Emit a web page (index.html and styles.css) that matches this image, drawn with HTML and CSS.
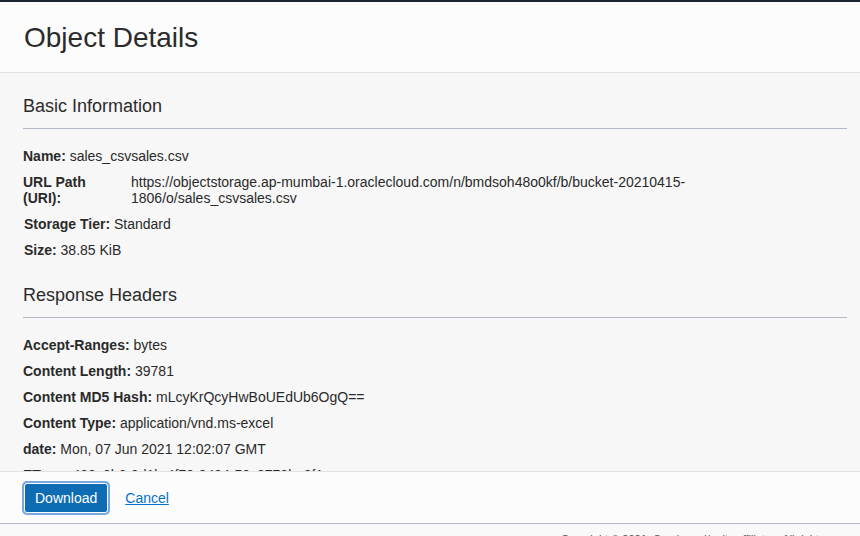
FILE: index.html
```html
<!DOCTYPE html>
<html lang="en">
<head>
<meta charset="utf-8">
<title>Object Details</title>
<link rel="stylesheet" href="styles.css">
</head>
<body>
<div class="page">
  <div class="topbar"></div>
  <header class="header">
    <h1 class="title">Object Details</h1>
  </header>
  <main class="content">
    <section class="section">
      <h2 class="section-title">Basic Information</h2>
      <div class="props">
        <div class="prop"><span class="label">Name:</span> sales_csvsales.csv</div>
        <div class="prop prop-grid"><span class="label">URL Path (URI):</span><span class="value">https://objectstorage.ap-mumbai-1.oraclecloud.com/n/bmdsoh48o0kf/b/bucket-20210415-<wbr>1806/o/sales_csvsales.csv</span></div>
        <div class="prop prop-indent"><span class="label">Storage Tier:</span> Standard</div>
        <div class="prop prop-indent"><span class="label">Size:</span> 38.85 KiB</div>
      </div>
    </section>
    <section class="section">
      <h2 class="section-title">Response Headers</h2>
      <div class="props">
        <div class="prop"><span class="label">Accept-Ranges:</span> bytes</div>
        <div class="prop"><span class="label">Content Length:</span> 39781</div>
        <div class="prop"><span class="label">Content MD5 Hash:</span> mLcyKrQcyHwBoUEdUb6OgQ==</div>
        <div class="prop"><span class="label">Content Type:</span> application/vnd.ms-excel</div>
        <div class="prop"><span class="label">date:</span> Mon, 07 Jun 2021 12:02:07 GMT</div>
        <div class="prop"><span class="label">ETag:</span> a488c0b6-9d1b-4f73-9494-53c8778be8f1</div>
        <div class="prop"><span class="label">last-modified:</span> Mon, 07 Jun 2021 11:58:31 GMT</div>
      </div>
    </section>
  </main>
  <footer class="actions">
    <button class="btn-primary" type="button">Download</button>
    <a class="link" href="#">Cancel</a>
  </footer>
  <div class="copyright">Copyright © 2021, Oracle and/or its affiliates. All rights reserved.</div>
</div>
</body>
</html>
```
FILE: styles.css
```css
* { box-sizing: border-box; }
html, body {
  margin: 0;
  padding: 0;
}
body {
  font-family: "Liberation Sans", Arial, sans-serif;
  color: #2a2a2a;
  background: #f9f9f9;
  overflow: hidden;
}
.page {
  display: flex;
  flex-direction: column;
  width: 860px;
  height: 536px;
  overflow: hidden;
}
.topbar {
  flex: 0 0 2px;
  background: #1d2532;
}
.header {
  flex: 0 0 71px;
  background: #fcfcfc;
  border-bottom: 1px solid #e2e2e2;
  padding: 0 24px;
}
.title {
  margin: 0;
  font-size: 28px;
  font-weight: normal;
  line-height: 72px;
  color: #2b2b2b;
  height: 70px;
}
.content {
  flex: 0 0 398px;
  overflow: hidden;
  background: #f7f7f7;
  padding: 22px 13px 0 23px;
}
.section + .section {
  margin-top: 26px;
}
.section-title {
  margin: 0;
  font-size: 18px;
  font-weight: normal;
  line-height: 22px;
  color: #2b2b2b;
  padding-bottom: 11px;
  border-bottom: 1px solid #b2bac7;
}
.props {
  margin-top: 19px;
  display: flex;
  flex-direction: column;
  gap: 10px;
}
.prop {
  font-size: 14px;
  line-height: 16px;
  white-space: nowrap;
}
.prop-indent {
  padding-left: 1px;
}
.label {
  font-weight: bold;
}
.prop-grid {
  display: grid;
  grid-template-columns: 92px 1fr;
  column-gap: 16px;
  white-space: normal;
}
.actions {
  flex: 0 0 53px;
  background: #fcfcfc;
  border-top: 1px solid #e2e2e2;
  border-bottom: 1px solid #b2bac7;
  display: flex;
  align-items: flex-start;
  gap: 17px;
  padding: 11px 0 0 24px;
}
.btn-primary {
  height: 30px;
  padding: 0 10px;
  font-family: inherit;
  font-size: 14px;
  color: #fff;
  background: #0d6cb3;
  border: 1px solid #fff;
  border-radius: 3px;
  box-shadow: 0 0 0 2px #78a8df;
  cursor: pointer;
}
.link {
  font-size: 14px;
  line-height: 30px;
  color: #0572ce;
  text-decoration: underline;
}
.copyright {
  flex: 0 0 40px;
  padding: 7px 0 0 561px;
  font-size: 11px;
  line-height: 16px;
  color: #555;
  white-space: nowrap;
  background: #f9f9f9;
}
```
